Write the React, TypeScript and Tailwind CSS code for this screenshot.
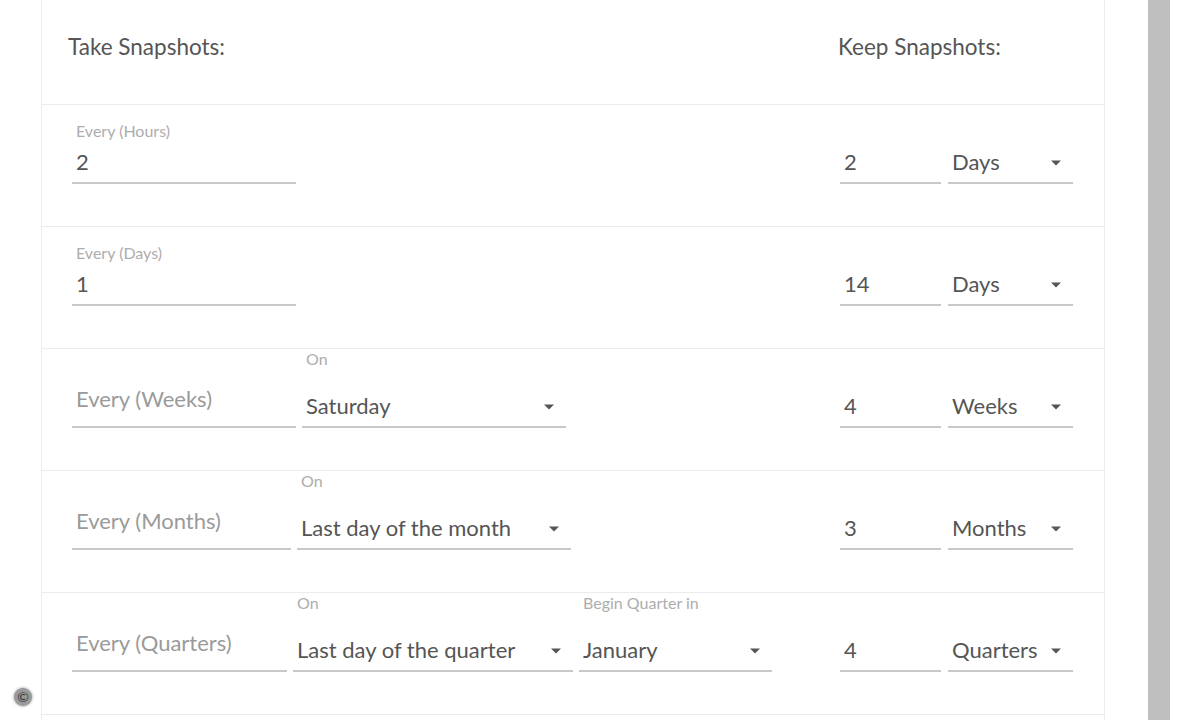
import React from "react";

function Caret() {
  return (
    <svg width="12" height="6" viewBox="0 0 12 6" className="shrink-0">
      <path d="M1 0.5 L11 0.5 L6 5.5 Z" fill="#555" />
    </svg>
  );
}

type FieldProps = {
  label?: string;
  labelTop?: boolean;
  value?: string;
  placeholder?: string;
  select?: boolean;
  width: string;
};

function Field({ label, labelTop, value, placeholder, select, width }: FieldProps) {
  return (
    <div className={`flex h-[78px] flex-col justify-end ${width}`}>
      {label && (
        <div
          className={`whitespace-nowrap pl-[4px] text-[16px] leading-[18px] text-[#adadad] ${
            labelTop ? "mb-[25px]" : "mb-[8px]"
          }`}
        >
          {label}
        </div>
      )}
      <div
        className={`flex h-[36px] items-end border-b-2 border-[#c8c8c8] pl-[4px] pr-[11px] ${
          placeholder ? "pb-[14px]" : "pb-[7px]"
        }`}
      >
        <span
          className={`flex-1 whitespace-nowrap text-[22px] leading-[26px] ${
            placeholder ? "text-[#9a9a9a]" : "text-[#555]"
          }`}
        >
          {placeholder ?? value}
        </span>
        {select && (
          <span className="mb-[9px]">
            <Caret />
          </span>
        )}
      </div>
    </div>
  );
}

function Keep({ amount, unit }: { amount: string; unit: string }) {
  return (
    <div className="flex gap-[7px]">
      <Field width="w-[101px]" value={amount} />
      <Field width="w-[125px]" value={unit} select />
    </div>
  );
}

function Row({ children, keep }: { children: React.ReactNode; keep?: React.ReactNode }) {
  return (
    <div className="flex h-[122px] shrink-0 items-start justify-between border-b border-[#ebebeb] pl-[30px] pr-[31px] pt-[1px]">
      <div className="flex items-start gap-[6px]">{children}</div>
      {keep}
    </div>
  );
}

export default function App() {
  return (
    <div
      className="relative flex h-[720px] w-[1200px] overflow-hidden bg-white"
      style={{ fontFamily: "Lato, 'Open Sans', sans-serif" }}
    >
      <div className="w-[41px] shrink-0" />
      <div className="flex w-[1064px] shrink-0 flex-col border-x border-[#ececec]">
        <div className="flex h-[105px] shrink-0 items-center justify-between border-b border-[#ebebeb] pb-[10px] pl-[26px]">
          <span className="text-[22.5px] text-[#555]">Take Snapshots:</span>
          <span className="w-[266px] text-[22.5px] text-[#555]">Keep Snapshots:</span>
        </div>

        <Row keep={<Keep amount="2" unit="Days" />}>
          <Field width="w-[224px]" label="Every (Hours)" value="2" />
        </Row>

        <Row keep={<Keep amount="14" unit="Days" />}>
          <Field width="w-[224px]" label="Every (Days)" value="1" />
        </Row>

        <Row keep={<Keep amount="4" unit="Weeks" />}>
          <Field width="w-[224px]" placeholder="Every (Weeks)" />
          <Field width="w-[264px]" label="On" labelTop value="Saturday" select />
        </Row>

        <Row keep={<Keep amount="3" unit="Months" />}>
          <Field width="w-[219px]" placeholder="Every (Months)" />
          <Field width="w-[274px]" label="On" labelTop value="Last day of the month" select />
        </Row>

        <Row keep={<Keep amount="4" unit="Quarters" />}>
          <Field width="w-[215px]" placeholder="Every (Quarters)" />
          <Field width="w-[280px]" label="On" labelTop value="Last day of the quarter" select />
          <Field width="w-[193px]" label="Begin Quarter in" labelTop value="January" select />
        </Row>

        <Row keep={<Keep amount="1" unit="Years" />}>
          <Field width="w-[230px]" placeholder="Every (Years)" />
          <Field width="w-[264px]" label="On" labelTop value="Last day of the year" select />
          <Field width="w-[193px]" label="Begin Year in" labelTop value="January" select />
        </Row>
      </div>
      <div className="w-[43px] shrink-0" />
      <div className="h-full w-[22px] shrink-0 bg-[#bfbfbf]" />

      <div className="absolute left-[14px] top-[688px] flex h-[18px] w-[18px] items-center justify-center rounded-full bg-[#9a9a9a] text-[14px] leading-none text-[#333] shadow-[0_0_3px_#888]">
        ©
      </div>
    </div>
  );
}
